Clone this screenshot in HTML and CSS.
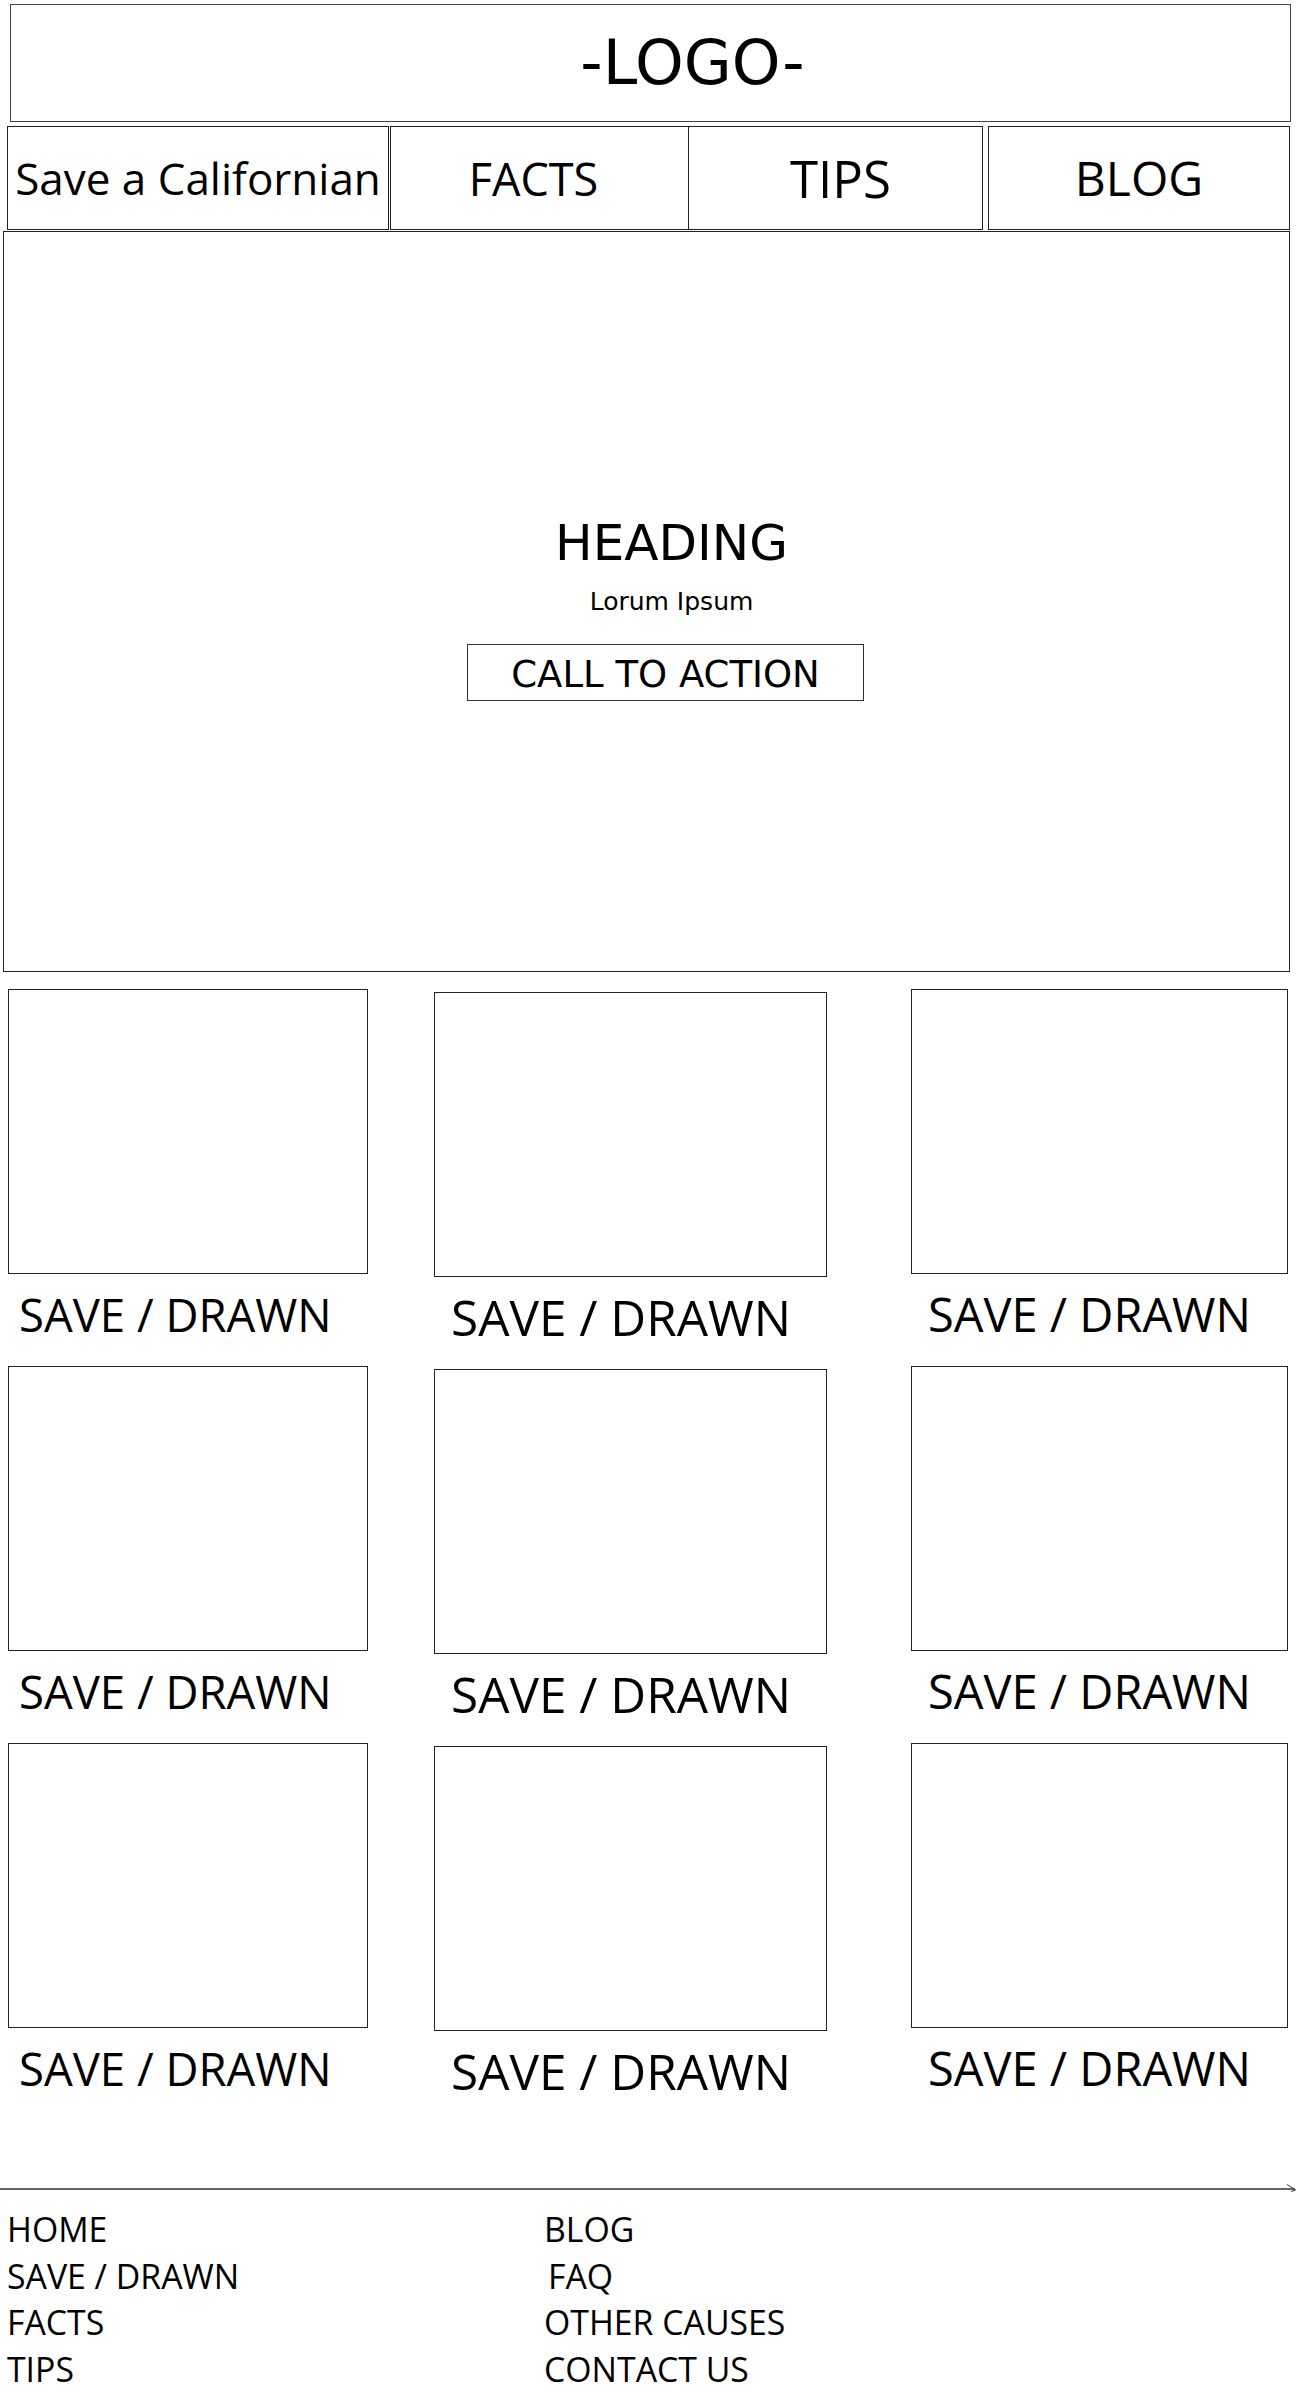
FILE: index.html
```html
<!DOCTYPE html>
<html lang="en">
<head>
<meta charset="utf-8">
<title>Save a Californian - Wireframe</title>
<link rel="stylesheet" href="styles.css">
</head>
<body>
<header class="logo-bar">
  <div class="logo">-LOGO-</div>
</header>
<nav class="nav">
  <a class="nav-item nav-home" href="#">Save a Californian</a>
  <a class="nav-item nav-facts" href="#">FACTS</a>
  <a class="nav-item nav-tips" href="#">TIPS</a>
  <a class="nav-item nav-blog" href="#">BLOG</a>
</nav>
<section class="hero">
  <h1 class="hero-title">HEADING</h1>
  <p class="hero-sub">Lorum Ipsum</p>
  <a class="cta" href="#">CALL TO ACTION</a>
</section>
<section class="cards">
  <div class="card-row">
    <div class="card card-a"><div class="thumb"></div><div class="card-label">SAVE / DRAWN</div></div>
    <div class="card card-b"><div class="thumb"></div><div class="card-label">SAVE / DRAWN</div></div>
    <div class="card card-c"><div class="thumb"></div><div class="card-label">SAVE / DRAWN</div></div>
  </div>
  <div class="card-row">
    <div class="card card-a"><div class="thumb"></div><div class="card-label">SAVE / DRAWN</div></div>
    <div class="card card-b"><div class="thumb"></div><div class="card-label">SAVE / DRAWN</div></div>
    <div class="card card-c"><div class="thumb"></div><div class="card-label">SAVE / DRAWN</div></div>
  </div>
  <div class="card-row">
    <div class="card card-a"><div class="thumb"></div><div class="card-label">SAVE / DRAWN</div></div>
    <div class="card card-b"><div class="thumb"></div><div class="card-label">SAVE / DRAWN</div></div>
    <div class="card card-c"><div class="thumb"></div><div class="card-label">SAVE / DRAWN</div></div>
  </div>
</section>
<footer class="footer">
  <svg class="rule" viewBox="0 0 1296 12" width="1296" height="12" aria-hidden="true">
    <line x1="0" y1="6" x2="1295" y2="6" stroke="#333" stroke-width="1.3"/>
    <path d="M1287 1.5 L1295.5 7 L1291 8.5" fill="none" stroke="#333" stroke-width="1"/>
  </svg>
  <div class="footer-links">
    <ul class="footer-col">
      <li><a href="#">HOME</a></li>
      <li><a href="#">SAVE / DRAWN</a></li>
      <li><a href="#">FACTS</a></li>
      <li><a href="#">TIPS</a></li>
    </ul>
    <ul class="footer-col">
      <li><a href="#">BLOG</a></li>
      <li class="nudge"><a href="#">FAQ</a></li>
      <li><a href="#">OTHER CAUSES</a></li>
      <li><a href="#">CONTACT US</a></li>
    </ul>
  </div>
</footer>
</body>
</html>
```

FILE: styles.css
```css
* {
  box-sizing: border-box;
}

body {
  margin: 0;
  background: #fff;
  color: #000;
  font-family: "Open Sans", "DejaVu Sans", sans-serif;
}

a {
  color: inherit;
  text-decoration: none;
}

/* Logo bar */
.logo-bar {
  margin: 4px 5px 0 10px;
  height: 118px;
  border: 1px solid #444;
  display: flex;
  align-items: center;
  justify-content: center;
  padding-left: 84px;
}

.logo {
  font-family: "DejaVu Sans", sans-serif;
  font-size: 62px;
  line-height: 1;
}

/* Navigation */
.nav {
  display: flex;
  height: 104px;
  margin-top: 4px;
  padding-left: 7px;
}

.nav-item {
  display: flex;
  align-items: center;
  justify-content: center;
  border: 1px solid #222;
  line-height: 1;
  white-space: nowrap;
}

.nav-home {
  width: 382px;
  font-size: 44px;
}

.nav-facts {
  width: 299px;
  margin-left: 1px;
  font-size: 45px;
  padding-right: 12px;
}

.nav-tips {
  width: 295px;
  margin-left: -1px;
  font-size: 51px;
  padding-left: 10px;
}

.nav-blog {
  width: 302px;
  margin-left: 5px;
  font-size: 48px;
}

/* Hero */
.hero {
  margin: 1px 6px 0 3px;
  height: 741px;
  border: 1px solid #222;
  display: flex;
  flex-direction: column;
  align-items: center;
  padding-top: 286px;
  padding-left: 50px;
  font-family: "DejaVu Sans", sans-serif;
}

.hero-title {
  margin: 0;
  font-weight: normal;
  font-size: 50px;
  line-height: 1;
}

.hero-sub {
  margin: 21px 0 0;
  font-size: 25px;
  line-height: 1;
}

.cta {
  margin-top: 30px;
  margin-left: -12px;
  width: 397px;
  height: 57px;
  border: 1px solid #333;
  padding-top: 11px;
  text-align: center;
  font-size: 37px;
  line-height: 1;
}

/* Cards */
.cards {
  margin-top: 17px;
  padding-left: 8px;
  display: flex;
  flex-direction: column;
  gap: 27px;
}

.card-row {
  display: flex;
  align-items: flex-start;
}

.card {
  display: flex;
  flex-direction: column;
}

.thumb {
  height: 285px;
  border: 1px solid #222;
}

.card-a {
  width: 360px;
}

.card-b {
  width: 393px;
  margin-left: 66px;
  margin-top: 3px;
}

.card-c {
  width: 377px;
  margin-left: 84px;
}

.card-label {
  margin-top: 18px;
  line-height: 44px;
  font-size: 45px;
  white-space: nowrap;
}

.card-a .card-label {
  padding-left: 11px;
  font-size: 45.5px;
}

.card-b .card-label {
  padding-left: 17px;
  font-size: 49.5px;
}

.card-c .card-label {
  padding-left: 17px;
  font-size: 47px;
}

/* Footer */
.footer {
  margin-top: 90px;
}

.rule {
  display: block;
  width: 1296px;
  height: 12px;
}

.footer-links {
  display: grid;
  grid-template-columns: 537px auto;
  margin-top: 11px;
  padding-left: 7px;
}

.footer-col {
  list-style: none;
  margin: 0;
  padding: 0;
  font-size: 33.8px;
  line-height: 46.67px;
}

.nudge {
  padding-left: 4px;
}
```
